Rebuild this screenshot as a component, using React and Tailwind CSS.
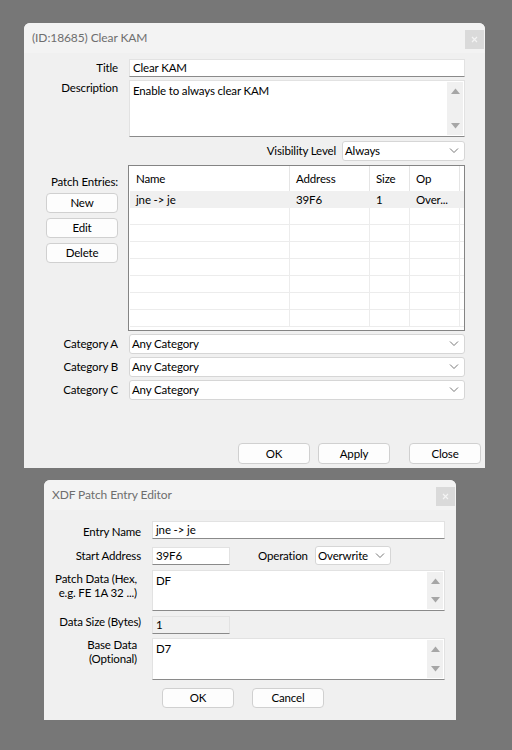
import { useState } from 'react';

const font = { fontFamily: 'Lato, "Noto Sans", sans-serif' };

const TitleBar = ({ title }) => (
  <div className="relative h-[30px] shrink-0 bg-[#f3f3f3] rounded-t-[6px] flex items-center pl-[8px]">
    <span className="text-[12px] tracking-[-0.1px] text-[#6e6e6e]">{title}</span>
    <div className="absolute right-[1px] top-[7px] w-[19px] h-[19px] bg-[#dadada] flex items-center justify-center">
      <svg width="7" height="7" viewBox="0 0 7 7">
        <path d="M1 1 L6 6 M6 1 L1 6" stroke="#f4f4f4" strokeWidth="1.2" />
      </svg>
    </div>
  </div>
);

const TextBox = ({ value, className = '', readOnly = false }) => (
  <div
    className={`border border-[#e2e2e2] border-b-[#8a8a8a] flex items-center px-[3px] text-black ${readOnly ? 'bg-[#f0f0f0]' : 'bg-white'} ${className}`}
  >
    {value}
  </div>
);

const ScrollArrows = () => (
  <div className="w-[16px] h-full bg-[#f0f0f0] flex flex-col justify-between items-center py-[6px]">
    <svg width="9" height="6" viewBox="0 0 9 6">
      <path d="M0 6 L4.5 0.5 L9 6 Z" fill="#a6a6a6" />
    </svg>
    <svg width="9" height="6" viewBox="0 0 9 6">
      <path d="M0 0 L4.5 5.5 L9 0 Z" fill="#a6a6a6" />
    </svg>
  </div>
);

const TextArea = ({ value, className = '' }) => (
  <div className={`bg-white border border-[#e2e2e2] border-b-[#8a8a8a] flex ${className}`}>
    <div className="flex-1 px-[3px] pt-[1px]">{value}</div>
    <div className="py-[1px] pr-[1px]">
      <ScrollArrows />
    </div>
  </div>
);

const Chevron = () => (
  <svg width="10" height="6" viewBox="0 0 10 6">
    <path d="M1 0.5 L5 4.5 L9 0.5" stroke="#6a6a6a" strokeWidth="0.9" fill="none" />
  </svg>
);

const Combo = ({ value, className = '' }) => (
  <div className={`bg-white border border-[#d6d6d6] rounded-[3px] flex items-center justify-between pl-[2px] pr-[5px] ${className}`}>
    <span>{value}</span>
    <Chevron />
  </div>
);

const Button = ({ label, className = '' }) => (
  <div className={`bg-[#fdfdfd] border border-[#d0d0d0] rounded-[4px] flex items-center justify-center text-black ${className}`}>
    {label}
  </div>
);

const columns = [
  { name: 'Name', width: 'w-[160px]' },
  { name: 'Address', width: 'w-[80px]' },
  { name: 'Size', width: 'w-[40px]' },
  { name: 'Op', width: 'w-[50px]' },
];

const rows = [['jne -> je', '39F6', '1', 'Over...']];

const PatchList = () => {
  const empty = Array.from({ length: 7 });
  return (
    <div className="w-[337px] h-[166px] border border-[#848484] bg-white overflow-hidden flex flex-col pl-[1px]">
      <div className="flex h-[25px] shrink-0">
        {columns.map((c) => (
          <div key={c.name} className={`${c.width} border-r border-[#e5e5e5] flex items-center pl-[6px]`}>
            {c.name}
          </div>
        ))}
      </div>
      {rows.map((r, i) => (
        <div key={i} className="flex h-[17px] shrink-0 bg-[#f0f0f0]">
          {r.map((v, j) => (
            <div key={j} className={`${columns[j].width} flex items-center pl-[6px]`}>
              {v}
            </div>
          ))}
        </div>
      ))}
      {empty.map((_, i) => (
        <div key={i} className="flex h-[17px] shrink-0 border-b border-[#ececec]">
          {columns.map((c) => (
            <div key={c.name} className={`${c.width} border-r border-[#ececec]`} />
          ))}
        </div>
      ))}
    </div>
  );
};

const Row = ({ label, children, className = '' }) => (
  <div className={`flex items-center ${className}`}>
    <div className="w-[94px] text-right shrink-0">{label}</div>
    <div className="ml-[11px]">{children}</div>
  </div>
);

const MainDialog = () => (
  <div className="absolute left-[24px] top-[23px] w-[461px] h-[445px] bg-[#f0f0f0] rounded-t-[6px] flex flex-col">
    <TitleBar title="(ID:18685) Clear KAM" />
    <div className="flex-1 flex flex-col pt-[6px]">
      <Row label="Title">
        <TextBox value="Clear KAM" className="w-[336px] h-[18px]" />
      </Row>
      <div className="flex mt-[3px]">
        <div className="w-[94px] text-right shrink-0 -mt-[1px]">Description</div>
        <TextArea value="Enable to always clear KAM" className="ml-[11px] w-[336px] h-[57px]" />
      </div>
      <div className="flex items-center justify-end pr-[20px] mt-[4px]">
        <span className="mr-[6px]">Visibility Level</span>
        <Combo value="Always" className="w-[123px] h-[20px]" />
      </div>
      <div className="flex mt-[4px]">
        <div className="w-[94px] pl-[22px] flex flex-col items-end shrink-0">
          <div className="mt-[9px] leading-[16px] whitespace-nowrap">Patch Entries:</div>
          <Button label="New" className="w-[72px] h-[20px] mt-[3px]" />
          <Button label="Edit" className="w-[72px] h-[20px] mt-[5px]" />
          <Button label="Delete" className="w-[72px] h-[20px] mt-[5px]" />
        </div>
        <div className="ml-[10px]">
          <PatchList />
        </div>
      </div>
      <Row label="Category A" className="mt-[3px]">
        <Combo value="Any Category" className="w-[336px] h-[20px]" />
      </Row>
      <Row label="Category B" className="mt-[3px]">
        <Combo value="Any Category" className="w-[336px] h-[20px]" />
      </Row>
      <Row label="Category C" className="mt-[3px]">
        <Combo value="Any Category" className="w-[336px] h-[20px]" />
      </Row>
      <div className="mt-auto mb-[4px] flex justify-end pr-[4px]">
        <Button label="OK" className="w-[72px] h-[21px]" />
        <Button label="Apply" className="w-[72px] h-[21px] ml-[8px]" />
        <Button label="Close" className="w-[72px] h-[21px] ml-[19px]" />
      </div>
    </div>
  </div>
);

const Label2 = ({ children, className = '' }) => (
  <div className={`w-[97px] text-right shrink-0 leading-[14px] whitespace-nowrap ${className}`}>{children}</div>
);

const EntryDialog = () => (
  <div className="absolute left-[44px] top-[480px] w-[412px] h-[240px] bg-[#f0f0f0] rounded-t-[6px] flex flex-col">
    <TitleBar title="XDF Patch Entry Editor" />
    <div className="flex-1 flex flex-col pt-[11px]">
      <div className="flex items-center">
        <Label2 className="mt-[3px]">Entry Name</Label2>
        <TextBox value="jne -> je" className="ml-[11px] w-[293px] h-[18px]" />
      </div>
      <div className="flex items-center mt-[7px]">
        <Label2>Start Address</Label2>
        <TextBox value="39F6" className="ml-[11px] w-[78px] h-[18px]" />
        <span className="ml-[28px] w-[48px] text-right whitespace-nowrap">Operation</span>
        <Combo value="Overwrite" className="ml-[9px] w-[76px] h-[19px]" />
      </div>
      <div className="flex mt-[5px]">
        <Label2 className="pt-[2px] pr-[4px]">
          Patch Data (Hex,
          <br />
          e.g. FE 1A 32 ...)
        </Label2>
        <TextArea value="DF" className="ml-[11px] w-[293px] h-[41px]" />
      </div>
      <div className="flex mt-[5px]">
        <Label2 className="-mt-[1px]">Data Size (Bytes)</Label2>
        <TextBox value="1" readOnly className="ml-[11px] w-[78px] h-[18px] border-[#d6d6d6] border-b-[#8a8a8a]" />
      </div>
      <div className="flex mt-[4px]">
        <Label2 className="pt-0 pr-[4px]">
          Base Data
          <br />
          (Optional)
        </Label2>
        <TextArea value="D7" className="ml-[11px] w-[293px] h-[42px]" />
      </div>
      <div className="flex mt-[8px] pl-[118px]">
        <Button label="OK" className="w-[72px] h-[20px]" />
        <Button label="Cancel" className="w-[72px] h-[20px] ml-[18px]" />
      </div>
    </div>
  </div>
);

export default function App() {
  const [ready] = useState(true);
  return (
    <div className="relative w-[512px] h-[750px] bg-[#777777] overflow-hidden text-black text-[11.5px] tracking-[-0.15px]" style={font}>
      {ready && <MainDialog />}
      {ready && <EntryDialog />}
    </div>
  );
}
